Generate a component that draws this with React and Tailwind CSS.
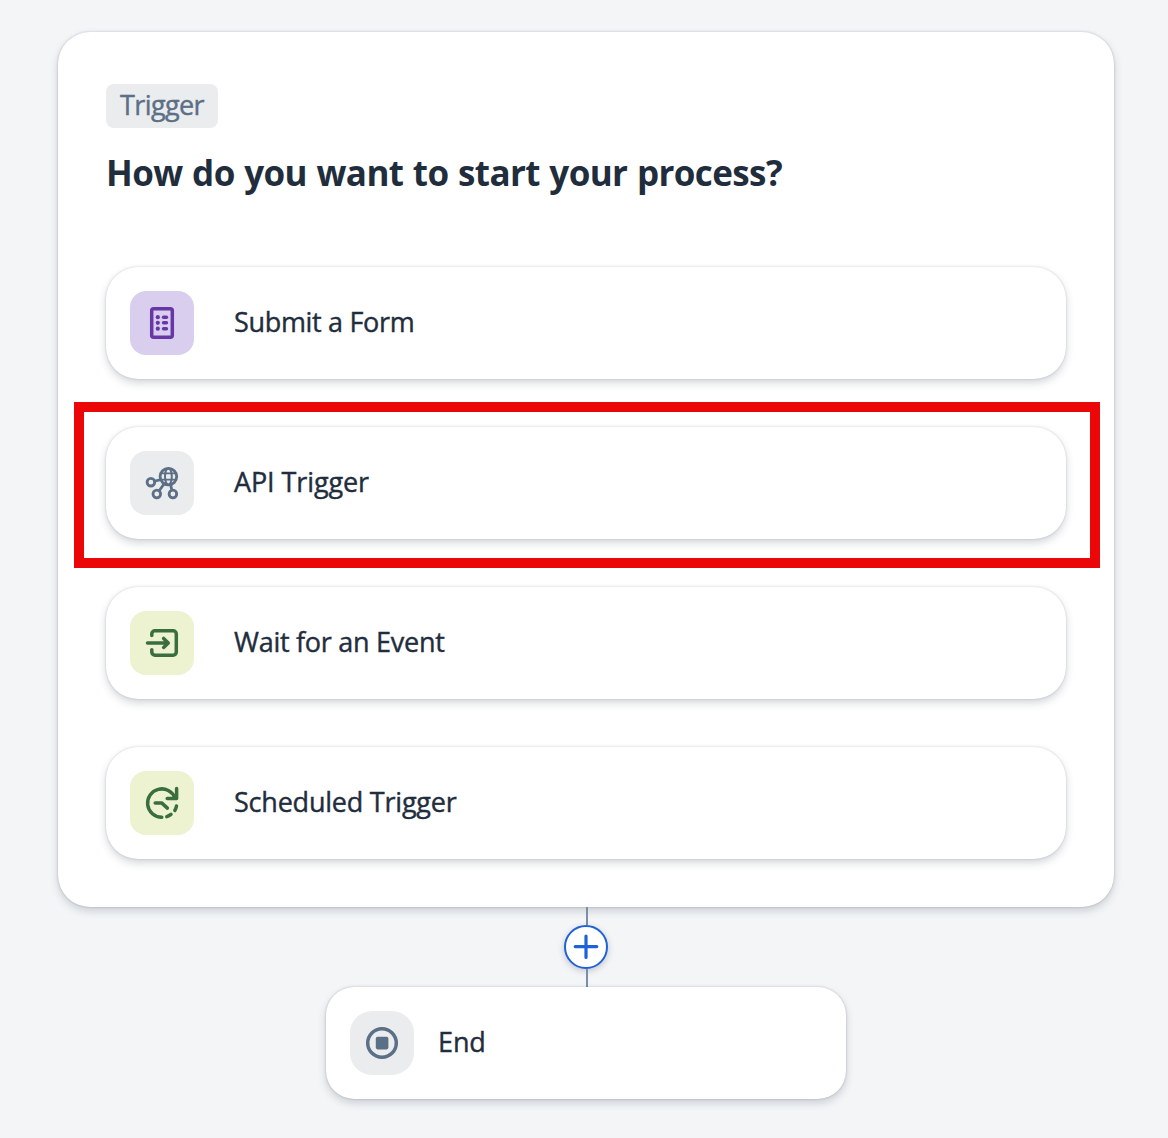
const panelShadow = "shadow-[0_0_2px_rgba(34,53,72,0.3),0_4px_8px_rgba(34,53,72,0.2)]";
const cardShadow = "shadow-[0_0_2px_rgba(34,53,72,0.24),0_4px_8px_rgba(34,53,72,0.2)]";

function Svg({ children }) {
  return (
    <svg
      className="h-8 w-8 overflow-visible"
      viewBox="0 0 32 32"
      fill="none"
      stroke="currentColor"
      strokeWidth="3.5"
      strokeLinecap="round"
      strokeLinejoin="round"
    >
      {children}
    </svg>
  );
}

function FormIcon() {
  return (
    <Svg>
      <rect x="5.7" y="1.7" width="20.6" height="28.6" rx="2" />
      {[10.2, 15.8, 21.7].map((y) => (
        <g key={y} fill="currentColor" stroke="none">
          <circle cx="11.8" cy={y} r="2.1" />
          <rect x="15.8" y={y - 1.8} width="6.4" height="3.6" rx="1.8" />
        </g>
      ))}
    </Svg>
  );
}

function ApiIcon() {
  return (
    <Svg>
      <g strokeWidth="2.8">
        <circle cx="22.4" cy="9.6" r="8.3" />
        <ellipse cx="22.4" cy="9.6" rx="3.4" ry="8.3" strokeWidth="2" />
        <path d="M14.8 6.4h15.2M14.8 12.6h15.2" strokeWidth="1.8" />
        <circle cx="4.9" cy="15.2" r="3.8" />
        <circle cx="10.8" cy="27" r="3.8" />
        <circle cx="26.9" cy="27" r="3.8" />
        <path d="M9 14l5-1.2M13.2 23.8l4.6-6.5M24.6 17.6l1.2 5.4" />
      </g>
    </Svg>
  );
}

function EventIcon() {
  return (
    <Svg>
      <path d="M5.8 8.6V7a3.2 3.2 0 0 1 3.2-3.2h18.1A3.2 3.2 0 0 1 30.3 7v18a3.2 3.2 0 0 1-3.2 3.2H9A3.2 3.2 0 0 1 5.8 25v-2.2" />
      <path d="M1.5 15.9h20.5M17.6 11.4l4.7 4.5-4.7 4.5" />
    </Svg>
  );
}

function ScheduleIcon() {
  return (
    <Svg>
      <path d="M15.8 30.3A14.2 14.2 0 1 1 29 10.9" />
      <path d="M30.6 1.5v9.9h-9.4" />
      <path d="M20.8 29.6a14 14 0 0 0 4.2-2.2M28.8 23.5a14 14 0 0 0 1.7-4.5" />
      <path d="M9.2 15.9h6.4l5.8 5.2" />
    </Svg>
  );
}

function StopIcon() {
  return (
    <Svg>
      <circle cx="16" cy="16" r="14.3" />
      <rect x="9.8" y="9.8" width="12.6" height="12.6" rx="1.8" fill="currentColor" stroke="none" />
    </Svg>
  );
}

const triggers = [
  { label: "Submit a Form", Icon: FormIcon, tile: "bg-[#d9ceed] text-[#6637a5]", text: "tracking-[-0.32px]" },
  { label: "API Trigger", Icon: ApiIcon, tile: "bg-[#eaecee] text-[#5b6f86]", text: "tracking-[-0.1px]", highlighted: true },
  { label: "Wait for an Event", Icon: EventIcon, tile: "bg-[#edf3d0] text-[#3a6e3f]", text: "tracking-[-0.27px]" },
  { label: "Scheduled Trigger", Icon: ScheduleIcon, tile: "bg-[#edf3d0] text-[#3a6e3f]", text: "tracking-[-0.22px]" },
];

function TriggerRow({ label, Icon, tile, text, highlighted }) {
  return (
    <button className={`relative flex h-28 w-full items-center rounded-[32px] bg-white px-6 text-left ${cardShadow}`}>
      <span className={`flex h-16 w-16 items-center justify-center rounded-2xl ${tile}`}>
        <Icon />
      </span>
      <span className={`ml-10 pb-0.5 whitespace-nowrap text-[27px] leading-8 [-webkit-text-stroke:0.4px] ${text}`}>{label}</span>
      {highlighted && (
        <span className="pointer-events-none absolute -top-[25px] -right-[34px] -bottom-[29px] -left-[32px] border-[10px] border-[#eb0707]" />
      )}
    </button>
  );
}

export default function App() {
  return (
    <main className="h-[1138px] w-[1168px] overflow-hidden bg-[#f4f5f7] pt-8 pl-[58px] font-['Open_Sans',sans-serif] text-[#1f2d3d]">
      <div className="flex w-[1056px] flex-col items-center">
        <section className={`h-[875px] w-full rounded-[32px] bg-white px-12 pt-[52px] ${panelShadow}`}>
          <div className="flex h-11 w-28 items-center justify-center rounded-lg bg-[#eaecee] pb-0.5 text-[27px] tracking-[-0.6px] text-[#5b6f86] [-webkit-text-stroke:0.4px]">
            Trigger
          </div>
          <h1 className="mt-[22px] h-12 whitespace-nowrap text-[35px] leading-[45px] font-bold tracking-[-0.6px] [word-spacing:1px]">
            How do you want to start your process?
          </h1>
          <div className="mt-[69px] flex flex-col gap-12">
            {triggers.map((t) => (
              <TriggerRow key={t.label} {...t} />
            ))}
          </div>
        </section>
        <div className="ml-0.5 h-[18px] w-0.5 bg-[#788fa6]" />
        <button
          aria-label="Add step"
          className="flex h-11 w-11 items-center justify-center rounded-full border-2 border-[#1f62d6] bg-white text-[#1f62d6] shadow-[0_2px_6px_rgba(34,53,72,0.25)]"
        >
          <svg className="h-7 w-7 shrink-0" viewBox="0 0 28 28" fill="none" stroke="currentColor" strokeWidth="3.2" strokeLinecap="round">
            <path d="M14 3v21.4M3.2 13.6h21.6" />
          </svg>
        </button>
        <div className="ml-0.5 h-[18px] w-0.5 bg-[#788fa6]" />
        <section className={`flex h-28 w-[520px] items-center rounded-[28px] bg-white px-6 ${panelShadow}`}>
          <span className="flex h-16 w-16 items-center justify-center rounded-[22px] bg-[#eaecee] text-[#5b6f86]">
            <StopIcon />
          </span>
          <span className="ml-6 pb-0.5 text-[27px] leading-8 tracking-[-0.1px] [-webkit-text-stroke:0.4px]">End</span>
        </section>
      </div>
    </main>
  );
}
